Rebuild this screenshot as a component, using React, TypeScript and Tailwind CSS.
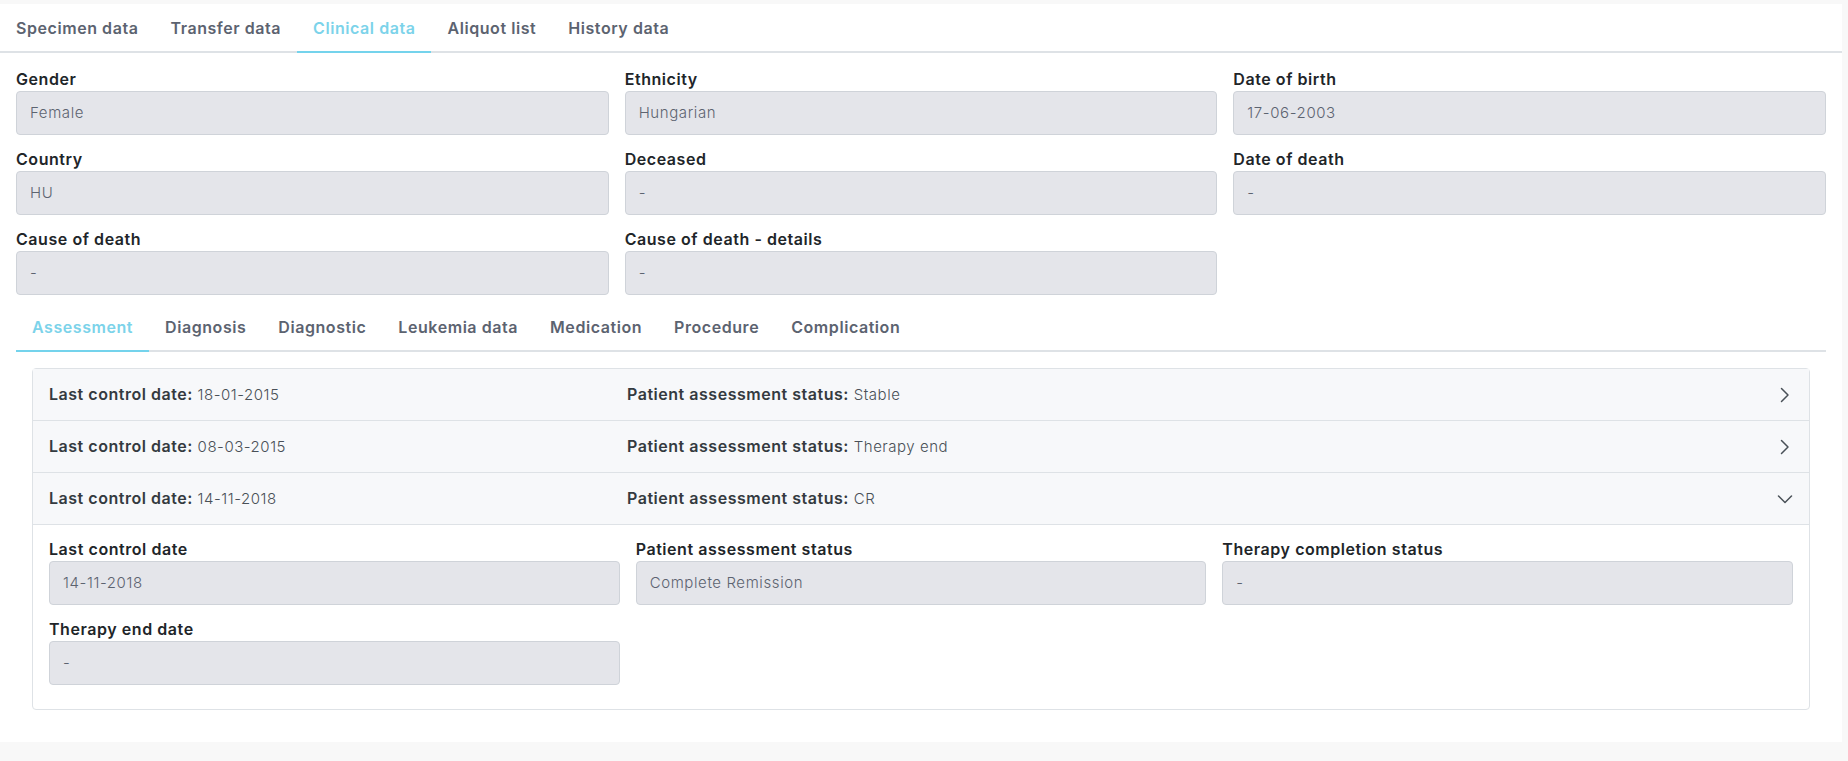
import type { ReactNode } from "react";

const font = { fontFamily: "Inter, 'Noto Sans', sans-serif" };

const topTabs = ["Specimen data", "Transfer data", "Clinical data", "Aliquot list", "History data"];
const subTabs = ["Assessment", "Diagnosis", "Diagnostic", "Leukemia data", "Medication", "Procedure", "Complication"];

const patientFields = [
    { label: "Gender", value: "Female" },
    { label: "Ethnicity", value: "Hungarian" },
    { label: "Date of birth", value: "17-06-2003" },
    { label: "Country", value: "HU" },
    { label: "Deceased", value: "-" },
    { label: "Date of death", value: "-" },
    { label: "Cause of death", value: "-" },
    { label: "Cause of death - details", value: "-" },
];

const assessments = [
    { date: "18-01-2015", status: "Stable", open: false },
    { date: "08-03-2015", status: "Therapy end", open: false },
    { date: "14-11-2018", status: "CR", open: true },
];

const detailFields = [
    { label: "Last control date", value: "14-11-2018" },
    { label: "Patient assessment status", value: "Complete Remission" },
    { label: "Therapy completion status", value: "-" },
    { label: "Therapy end date", value: "-" },
];

function Tabs({ items, active }: { items: string[]; active: string }) {
    return (
        <div className="flex border-b-2 border-[#dee2e6]">
            {items.map((t) => (
                <div
                    key={t}
                    className={
                        "-mb-[2px] flex h-[49px] items-center border-b-2 px-4 text-[16px] font-semibold tracking-[0.035em] " +
                        (t === active ? "border-[#74d3ec] text-[#7cd3ea]" : "border-transparent text-[#5c6370]")
                    }
                >
                    {t}
                </div>
            ))}
        </div>
    );
}

function Field({ label, value }: { label: string; value: string }) {
    return (
        <div>
            <div className="h-6 text-[16px] font-semibold leading-6 tracking-[0.035em] text-[#212529]">{label}</div>
            <div className="flex h-11 items-center rounded border border-[#cfd3d9] bg-[#e4e5ea] px-[13px] text-[15px] font-light tracking-[0.04em] text-[#5c6370]">
                {value}
            </div>
        </div>
    );
}

function Chevron({ open }: { open: boolean }): ReactNode {
    return (
        <svg width="16" height="16" viewBox="0 0 16 16" fill="none" stroke="#495057" strokeWidth="1.5" strokeLinecap="round" strokeLinejoin="round">
            {open ? <path d="M1.5 5L8 11.5L14.5 5" /> : <path d="M4.5 1.5L11 8L4.5 14.5" />}
        </svg>
    );
}

export default function App() {
    return (
        <div className="min-h-screen bg-[#f8f8f8] pt-1 pr-[6px]" style={font}>
            <div className="bg-white pb-8">
                <Tabs items={topTabs} active="Clinical data" />

                <div className="px-4 pt-[14px]">
                    <div className="grid grid-cols-3 gap-x-4 gap-y-3">
                        {patientFields.map((f) => (
                            <Field key={f.label} label={f.label} value={f.value} />
                        ))}
                    </div>

                    <div className="mt-[8px]">
                        <Tabs items={subTabs} active="Assessment" />
                    </div>

                    <div className="mx-4 mt-4 rounded border border-[#dee2e6]">
                        {assessments.map((a) => (
                            <div key={a.date}>
                                <div className="flex h-[52px] items-center border-b border-[#dee2e6] bg-[#f7f8fa] px-4 text-[15px] tracking-[0.035em] text-[#343a40]">
                                    <div className="w-[578px]">
                                        <span className="text-[16px] font-semibold">Last control date:</span>{" "}
                                        <span className="font-light text-[#495057]">{a.date}</span>
                                    </div>
                                    <div className="flex-1">
                                        <span className="text-[16px] font-semibold">Patient assessment status:</span>{" "}
                                        <span className="font-light text-[#495057]">{a.status}</span>
                                    </div>
                                    <Chevron open={a.open} />
                                </div>
                                {a.open && (
                                    <div className="grid grid-cols-3 gap-x-4 gap-y-3 px-4 pt-3 pb-6">
                                        {detailFields.map((f) => (
                                            <Field key={f.label} label={f.label} value={f.value} />
                                        ))}
                                    </div>
                                )}
                            </div>
                        ))}
                    </div>
                </div>
            </div>
        </div>
    );
}
